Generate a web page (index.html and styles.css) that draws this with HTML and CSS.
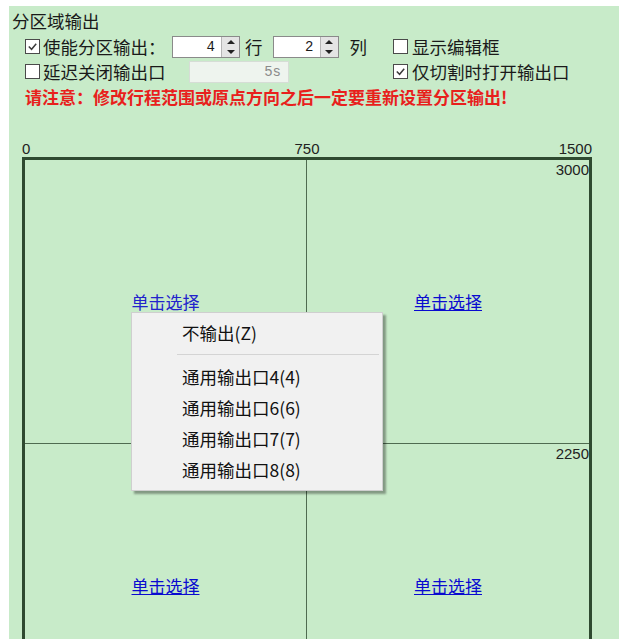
FILE: index.html
```html
<!DOCTYPE html>
<html>
<head>
<meta charset="utf-8">
<title>分区域输出</title>
<link rel="stylesheet" href="styles.css">
</head>
<body>
<div class="panel">
    <div class="title">分区域输出</div>

    <div class="opt-row first">
        <div class="left">
            <span class="check on"><svg viewBox="0 0 14 14"><polyline points="3,7 6,10 11,4"/></svg></span>
            <span class="lbl lbl-enable">使能分区输出：</span>
            <span class="spin spin-rows"><span class="num">4</span><span class="arrows"><i class="up"></i><i class="dn"></i></span></span>
            <span class="unit">行</span>
            <span class="spin spin-cols"><span class="num">2</span><span class="arrows"><i class="up"></i><i class="dn"></i></span></span>
            <span class="unit unit-col">列</span>
        </div>
        <div class="right">
            <span class="check"></span>
            <span class="lbl">显示编辑框</span>
        </div>
    </div>

    <div class="opt-row">
        <div class="left">
            <span class="check"></span>
            <span class="lbl lbl-delay">延迟关闭输出口</span>
            <span class="field-off">5s</span>
        </div>
        <div class="right">
            <span class="check on"><svg viewBox="0 0 14 14"><polyline points="3,7 6,10 11,4"/></svg></span>
            <span class="lbl">仅切割时打开输出口</span>
        </div>
    </div>

    <div class="warn">请注意：修改行程范围或原点方向之后一定要重新设置分区输出!</div>

    <div class="chart">
        <div class="scale-x">
            <span class="sx-start">0</span>
            <span class="sx-mid">750</span>
            <span class="sx-end">1500</span>
        </div>
        <div class="board">
            <div class="cell"><a class="pick plain">单击选择</a></div>
            <div class="cell edge"><span class="mark">3000</span><a class="pick">单击选择</a></div>
            <div class="cell"><a class="pick">单击选择</a></div>
            <div class="cell edge"><span class="mark">2250</span><a class="pick">单击选择</a></div>
        </div>
    </div>

    <div class="menu">
        <div class="item">不输出(Z)</div>
        <div class="sep"></div>
        <div class="item">通用输出口4(4)</div>
        <div class="item">通用输出口6(6)</div>
        <div class="item">通用输出口7(7)</div>
        <div class="item">通用输出口8(8)</div>
    </div>
</div>
</body>
</html>
```

FILE: styles.css
```css
html, body{
    margin:0;
    background-color:white;
}

body{
    font-family:"Noto Sans CJK SC", "Noto Sans", sans-serif;
    font-size:17.5px;
    color:#1a1a1a;
}

.panel{
    position:relative;
    margin:6px 0 0 9px;
    width:610px;
    height:633px;
    overflow:hidden;
    background-color:#c8ebc9;
}

.title{
    padding:4px 0 0 3px;
    height:22px;
    line-height:22px;
}

.opt-row{
    display:flex;
    align-items:center;
    height:25px;
    padding-left:16px;
}

.opt-row.first{
    margin-top:2px;
}

.left{
    display:flex;
    align-items:center;
    width:368px;
}

.right{
    display:flex;
    align-items:center;
}

.check{
    display:inline-block;
    box-sizing:border-box;
    width:15px;
    height:15px;
    border:1px solid #4a4a4a;
    background-color:white;
}

.check svg{
    display:block;
    width:13px;
    height:13px;
    fill:none;
    stroke:#3c3c3c;
    stroke-width:1.6;
}

.lbl{
    margin-left:3px;
    line-height:20px;
}

.right .lbl{
    margin-left:4px;
}

.lbl-enable{
    width:129px;
}

.lbl-delay{
    width:146px;
}

.spin{
    display:flex;
    box-sizing:border-box;
    height:22px;
    border:1px solid #8a8a8a;
    background-color:white;
}

.spin-rows{
    width:68px;
}

.spin-cols{
    width:66px;
    margin-left:10px;
}

.num{
    flex:1;
    text-align:right;
    padding-right:6px;
    font-family:"Liberation Mono", monospace;
    font-size:14px;
    line-height:20px;
}

.arrows{
    display:flex;
    flex-direction:column;
    justify-content:space-around;
    align-items:center;
    width:17px;
    background-color:#e4e4e4;
    border-left:1px solid #b5b5b5;
}

.arrows i{
    width:0;
    height:0;
    border-left:4px solid transparent;
    border-right:4px solid transparent;
}

.arrows .up{
    border-bottom:4px solid #222;
}

.arrows .dn{
    border-top:4px solid #222;
}

.unit{
    margin-left:5px;
}

.unit-col{
    margin-left:11px;
}

.field-off{
    box-sizing:border-box;
    width:100px;
    height:22px;
    padding-right:7px;
    text-align:right;
    font-family:"Liberation Mono", monospace;
    font-size:14px;
    line-height:21px;
    color:#8a8a8a;
    background-color:#eef4ee;
    border:1px solid #d6ddd6;
}

.warn{
    padding-left:16px;
    height:25px;
    line-height:25px;
    font-size:17px;
    font-weight:bold;
    color:#e8201c;
}

.chart{
    margin:31px 0 0 13px;
    width:570px;
}

.scale-x{
    display:grid;
    grid-template-columns:1fr auto 1fr;
    height:17px;
    font-family:"Liberation Sans", sans-serif;
    font-size:15px;
    line-height:17px;
    color:#222;
}

.sx-end{
    justify-self:end;
}

.board{
    display:grid;
    grid-template-columns:1fr 1fr;
    grid-template-rows:284px 284px;
    border:3px solid #2f4a30;
}

.cell{
    display:grid;
    border-right:1px solid #4f6b50;
    border-bottom:1px solid #4f6b50;
}

.cell.edge{
    border-right:none;
}

.mark, .pick{
    grid-area:1 / 1;
}

.mark{
    justify-self:end;
    align-self:start;
    margin-top:1px;
    font-family:"Liberation Sans", sans-serif;
    font-size:15px;
    color:#222;
}

.pick{
    place-self:center;
    font-size:17px;
    color:#0a0ad0;
    text-decoration:underline;
    cursor:pointer;
}

.pick.plain{
    text-decoration:none;
    color:#2222cc;
}

.menu{
    position:absolute;
    left:122px;
    top:306px;
    box-sizing:border-box;
    width:252px;
    padding:4px 0 5px;
    background-color:#f1f1f1;
    border:1px solid #cfcfcf;
    box-shadow:3px 3px 2px rgba(0,0,0,0.35);
    font-size:17.5px;
}

.item{
    height:31px;
    line-height:31px;
    padding-left:50px;
    color:#111;
}

.sep{
    height:1px;
    margin:6px 3px 6px 45px;
    background-color:#d4d4d4;
}
```
